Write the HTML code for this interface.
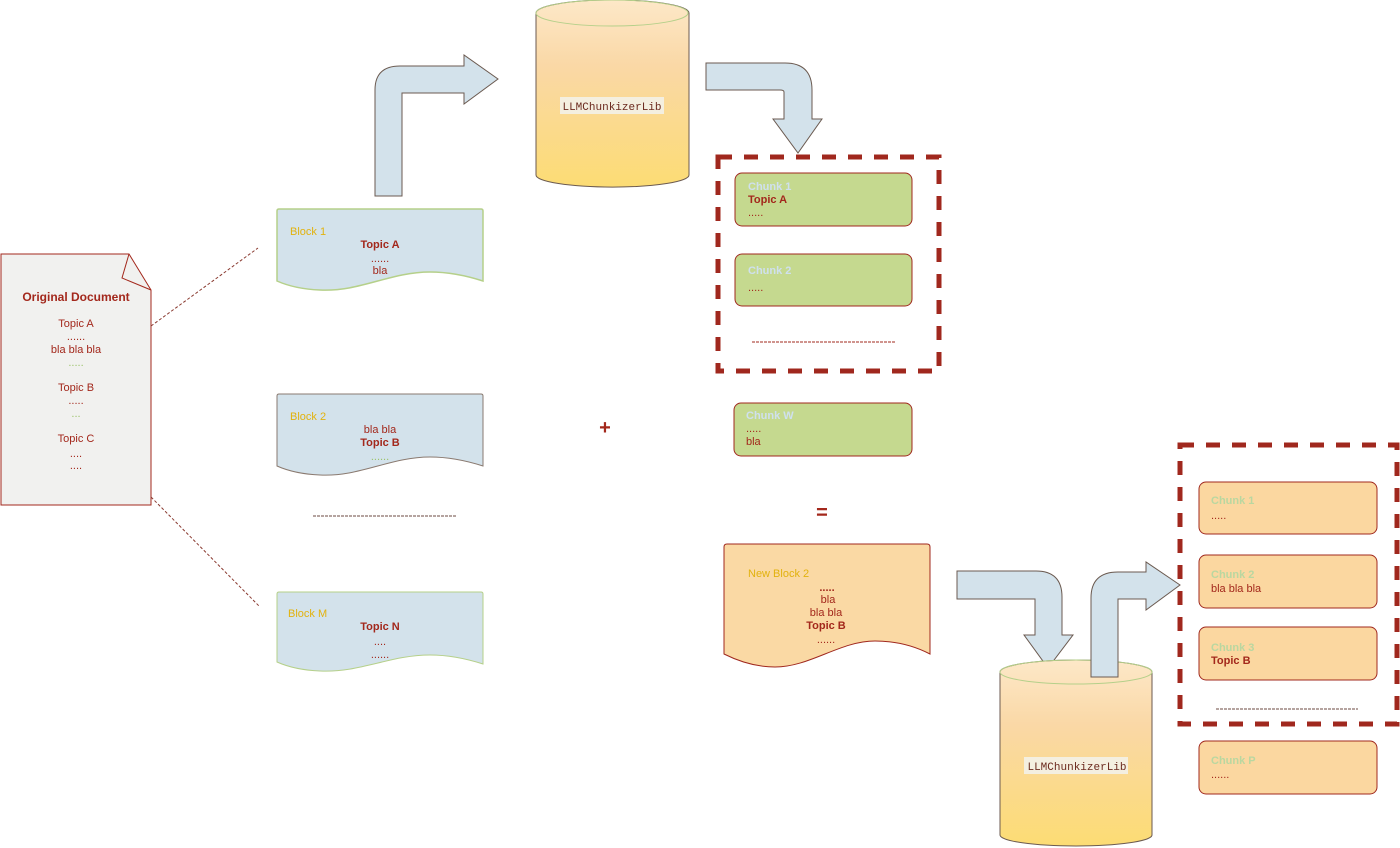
<!DOCTYPE html>
<html><head><style>
html,body{margin:0;padding:0;background:#fff;width:1400px;height:848px;overflow:hidden}
svg{display:block}
text{font-family:"Liberation Sans",sans-serif;font-size:11px;fill:#a3281c}
.b{font-weight:bold}
.lbl{fill:#e2b20e}
.cl{fill:#cfe0ee;font-weight:bold}
.cg{fill:#b9d7a0;font-weight:bold}
.g{fill:#9cc36a}
.mono{font-family:"Liberation Mono",monospace;fill:#6b2a1e;font-size:11px}
</style></head><body>
<svg width="1400" height="848" viewBox="0 0 1400 848">
<defs>
<linearGradient id="cyl" x1="0" y1="0" x2="0" y2="1">
<stop offset="0" stop-color="#fde8c8"/><stop offset="0.35" stop-color="#fad8a6"/><stop offset="1" stop-color="#fcdc74"/>
</linearGradient>
</defs>
<!-- original document -->
<path d="M1,254 H129 L151,290 V505 H1 Z" fill="#f1f1ef" stroke="#a3281c" stroke-width="1"/>
<path d="M129,254 L122,278 L151,290" fill="none" stroke="#a3281c" stroke-width="1"/>
<g text-anchor="middle">
<text x="76" y="301" class="b" style="font-size:12px">Original Document</text>
<text x="76" y="327">Topic A</text>
<text x="76" y="340">......</text>
<text x="76" y="353">bla bla  bla</text>
<text x="76" y="366" class="g">.....</text>
<text x="76" y="391">Topic B</text>
<text x="76" y="404">.....</text>
<text x="76" y="417" class="g">...</text>
<text x="76" y="442">Topic C</text>
<text x="76" y="457">....</text>
<text x="76" y="469">....</text>
</g>
<line x1="151" y1="326" x2="258" y2="248" stroke="#8a3a30" stroke-dasharray="3,2"/>
<line x1="151" y1="497" x2="260" y2="607" stroke="#8a3a30" stroke-dasharray="3,2"/>
<!-- blocks -->
<path d="M277,211 Q277,209 279,209 H481 Q483,209 483,211 V281 Q455,272 430,272 C390,272 360,292 320,290 Q295,289 277,281 Z" fill="#d3e2eb" stroke="#b5d08a" stroke-width="1.5"/>
<text x="290" y="235" class="lbl">Block 1</text>
<g text-anchor="middle"><text x="380" y="248" class="b">Topic A</text><text x="380" y="262">......</text><text x="380" y="274">bla</text></g>
<path d="M277,396 Q277,394 279,394 H481 Q483,394 483,396 V466 Q455,457 430,457 C390,457 360,477 320,475 Q295,474 277,466 Z" fill="#d3e2eb" stroke="#8a7a70" stroke-width="1"/>
<text x="290" y="420" class="lbl">Block 2</text>
<g text-anchor="middle"><text x="380" y="433">bla bla</text><text x="380" y="446" class="b">Topic B</text><text x="380" y="460" class="g">......</text></g>
<line x1="313" y1="516" x2="456" y2="516" stroke="#6b4a40" stroke-dasharray="3,1"/>
<path d="M277,594 Q277,592 279,592 H481 Q483,592 483,594 V664 Q455,655 430,655 C390,655 360,673 320,671 Q295,670 277,662 Z" fill="#d3e2eb" stroke="#b5d08a" stroke-width="1"/>
<text x="288" y="617" class="lbl">Block M</text>
<g text-anchor="middle"><text x="380" y="630" class="b">Topic N</text><text x="380" y="645">....</text><text x="380" y="658">......</text></g>
<!-- arrow 1 -->
<path d="M375,196 V90 Q375,66 400,66 H464 V55 L498,79 L464,104 V93 H402 V196 Z" fill="#d3e2eb" stroke="#6b5a50" stroke-width="1"/>
<!-- cylinder 1 -->
<path d="M536,13 A76,13 0 0 1 689,13 V175 A76,12 0 0 1 536,175 Z" fill="url(#cyl)" stroke="#6b5a50" stroke-width="1"/>
<ellipse cx="612" cy="13" rx="76" ry="13" fill="none" stroke="#b5d08a"/>
<rect x="560" y="97" width="104" height="17" fill="#f4efe0"/>
<text x="612" y="110" text-anchor="middle" class="mono">LLMChunkizerLib</text>
<!-- arrow 2 -->
<path d="M706,63 H785 Q812,63 812,90 V119 H822 L798,153 L773,119 H784 V92 Q784,90 780,90 H706 Z" fill="#d3e2eb" stroke="#6b5a50" stroke-width="1"/>
<!-- dashed box 1 -->
<rect x="718" y="157" width="221" height="214" fill="none" stroke="#a0281e" stroke-width="5" stroke-dasharray="14,12"/>
<rect x="735" y="173" width="177" height="53" rx="7" fill="#c5d98f" stroke="#a0281e"/>
<text x="748" y="190" class="cl">Chunk 1</text><text x="748" y="203" class="b">Topic A</text><text x="748" y="216">.....</text>
<rect x="735" y="254" width="177" height="52" rx="7" fill="#c5d98f" stroke="#a0281e"/>
<text x="748" y="274" class="cl">Chunk 2</text><text x="748" y="291">.....</text>
<line x1="752" y1="342" x2="895" y2="342" stroke="#a0281e" stroke-dasharray="3,1"/>
<rect x="734" y="403" width="178" height="53" rx="7" fill="#c5d98f" stroke="#a0281e"/>
<text x="746" y="419" class="cl">Chunk W</text><text x="746" y="432">.....</text><text x="746" y="445">bla</text>
<text x="605" y="434" text-anchor="middle" class="b" style="font-size:20px">+</text>
<text x="822" y="519" text-anchor="middle" class="b" style="font-size:20px">=</text>
<!-- new block 2 -->
<path d="M724,547 Q724,544 727,544 H927 Q930,544 930,547 V654 Q905,641 875,641 C840,641 810,667 775,667 Q750,667 724,654 Z" fill="#fad9a4" stroke="#a0281e" stroke-width="1"/>
<text x="748" y="577" class="lbl">New Block 2</text>
<g text-anchor="middle"><text x="827" y="591" class="b">.....</text><text x="828" y="603">bla</text><text x="826" y="616">bla bla</text><text x="826" y="629" class="b">Topic B</text><text x="826" y="643">......</text></g>
<!-- arrow 3 -->
<path d="M957,571 H1036 Q1062,571 1062,597 V635 H1073 L1048,668 L1024,635 H1035 V599 H957 Z" fill="#d3e2eb" stroke="#6b5a50" stroke-width="1"/>
<!-- cylinder 2 -->
<path d="M1000,672 A76,12 0 0 1 1152,672 V835 A76,11 0 0 1 1000,835 Z" fill="url(#cyl)" stroke="#6b5a50" stroke-width="1"/>
<ellipse cx="1076" cy="672" rx="76" ry="12" fill="none" stroke="#b5d08a"/>
<!-- arrow 4 -->
<path d="M1091,677 V598 Q1091,572 1118,572 H1146 V562 L1180,585 L1146,610 V599 H1118 V677 Z" fill="#d3e2eb" stroke="#6b5a50" stroke-width="1"/>
<rect x="1024" y="757" width="104" height="17" fill="#f4efe0"/>
<text x="1077" y="770" text-anchor="middle" class="mono">LLMChunkizerLib</text>
<!-- dashed box 2 -->
<rect x="1180" y="445" width="217" height="279" fill="none" stroke="#a0281e" stroke-width="5" stroke-dasharray="14,12"/>
<rect x="1199" y="482" width="178" height="52" rx="7" fill="#fbd7a0" stroke="#a0281e"/>
<text x="1211" y="504" class="cg">Chunk 1</text><text x="1211" y="519">.....</text>
<rect x="1199" y="555" width="178" height="53" rx="7" fill="#fbd7a0" stroke="#a0281e"/>
<text x="1211" y="578" class="cg">Chunk 2</text><text x="1211" y="592">bla bla bla</text>
<rect x="1199" y="627" width="178" height="53" rx="7" fill="#fbd7a0" stroke="#a0281e"/>
<text x="1211" y="651" class="cg">Chunk 3</text><text x="1211" y="664" class="b">Topic B</text>
<line x1="1216" y1="709" x2="1358" y2="709" stroke="#6b4a40" stroke-dasharray="3,1"/>
<rect x="1199" y="741" width="178" height="53" rx="7" fill="#fbd7a0" stroke="#a0281e"/>
<text x="1211" y="764" class="cg">Chunk P</text><text x="1211" y="778">......</text>
</svg>
</body></html>
